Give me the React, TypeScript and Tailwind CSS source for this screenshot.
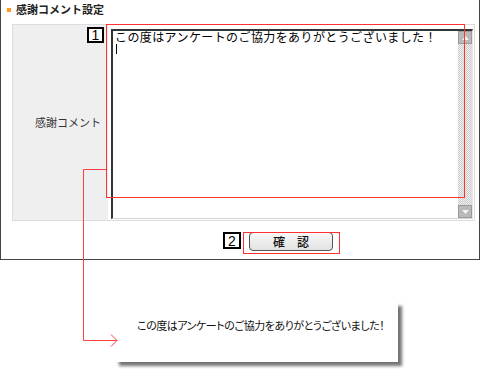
import React from 'react';

const jp = "font-['Noto_Sans_CJK_JP','Noto_Sans',sans-serif]";
const MESSAGE = 'この度はアンケートのご協力をありがとうございました！';

const Badge = ({ n, className }: { n: string; className: string }) => (
  <div
    className={`absolute flex items-center justify-center border-2 border-black bg-white text-[14px] leading-none text-black font-['Liberation_Sans',sans-serif] ${className}`}
  >
    {n}
  </div>
);

const ScrollButton = ({ down }: { down?: boolean }) => (
  <div className="flex h-[13px] w-[14px] items-center justify-center border border-[#9a9a9a] bg-[#b9b9b9]">
    <svg width="7" height="4" viewBox="0 0 7 4">
      <path d={down ? 'M0 0 L7 0 L3.5 4 Z' : 'M0 4 L7 4 L3.5 0 Z'} fill="#f4f4f4" />
    </svg>
  </div>
);

const FakeTextarea = () => (
  <div className="flex h-[190px] w-[362px] border-t-2 border-l-2 border-r border-b border-t-[#333] border-l-[#333] border-r-[#e4e4e4] border-b-[#d4d4d4] bg-white">
    <div className="flex-1 pl-[2px] pt-0">
      <p className={`${jp} text-[12px] leading-[12px] tracking-[0.4px] text-black whitespace-nowrap`}>{MESSAGE}</p>
      <div className="ml-px mt-px h-[10px] w-px bg-black" />
    </div>
    <div className="flex w-[14px] flex-col bg-[repeating-conic-gradient(#cdcdcd_0_25%,#eeeeee_0_50%)] bg-[length:2px_2px]">
      <ScrollButton />
      <div className="flex-1" />
      <ScrollButton down />
    </div>
  </div>
);

export default function App() {
  return (
    <div className="relative h-[369px] w-[480px] overflow-hidden bg-white">
      {/* settings panel */}
      <div className="h-[260px] w-[480px] border-x border-b border-[#444]">
        <div className="flex h-[24px] items-start pl-[6px] pt-[2px]">
          <span className="mt-[6px] h-[4px] w-[4px] bg-[#ff9a1a]" />
          <span className={`${jp} ml-[5px] text-[11px] font-bold leading-[14px] text-[#222]`}>感謝コメント設定</span>
        </div>
        <div className="ml-[11px] flex h-[197px] w-[463px] border border-[#dcdcdc]">
          <div className="flex w-[95px] items-center justify-end bg-[#efefef] pr-[7px]">
            <span className={`${jp} text-[11px] text-[#333]`}>感謝コメント</span>
          </div>
          <div className="flex-1 pl-[3px] pt-[4px]">
            <FakeTextarea />
          </div>
        </div>
        <div className="ml-[107px] mt-[11px] flex w-[366px] justify-center">
          <div
            className={`${jp} flex h-[19px] w-[84px] items-center justify-center rounded-[4px] border border-[#555] bg-gradient-to-b from-[#f8f8f8] to-[#e2e2e2] text-[12px] font-medium text-[#111]`}
          >
            確　認
          </div>
        </div>
      </div>

      {/* preview callout */}
      <div className="ml-[115px] mt-[42px] h-[60px] w-[283px] bg-white pl-[22px] pt-[15px] shadow-[4px_4px_3px_rgba(0,0,0,0.55)]">
        <p className={`${jp} text-[11px] leading-[16px] tracking-[-0.45px] text-[#111] whitespace-nowrap [font-feature-settings:'palt']`}>
          {MESSAGE}
        </p>
      </div>

      {/* annotations */}
      <div className="absolute left-[106px] top-[24px] h-[174px] w-[359px] border border-[#ff3030]" />
      <div className="absolute left-[243px] top-[232px] h-[22px] w-[97px] border border-[#ff3030]" />
      <Badge n="1" className="left-[87px] top-[27px] h-[16px] w-[17px]" />
      <Badge n="2" className="left-[223px] top-[232px] h-[17px] w-[18px]" />
      <svg className="absolute left-0 top-0" width="480" height="369" viewBox="0 0 480 369">
        <path d="M106 169.5 H83.5 V340.5 H117" fill="none" stroke="#ff4040" strokeWidth="1" />
        <path d="M111 334.5 L117 340.5 L111 346.5" fill="none" stroke="#ff4040" strokeWidth="1" />
      </svg>
    </div>
  );
}
